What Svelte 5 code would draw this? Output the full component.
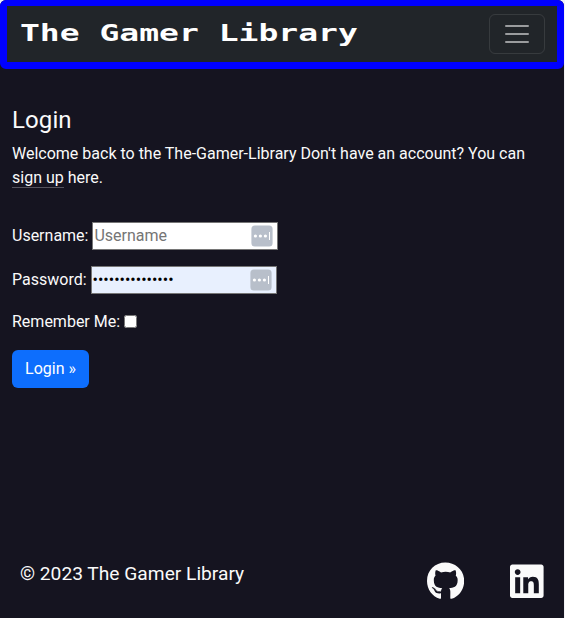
<script>
  let username = $state('');
  let password = $state('gamerlibrary123');
  let remember = $state(false);
</script>

{#snippet filler()}
  <svg class="filler" width="22" height="22" viewBox="0 0 22 22" aria-hidden="true">
    <rect x="0.4" y="0.4" width="21.2" height="21.2" rx="3.5" fill="#b8bfca" />
    <circle cx="4.4" cy="11" r="1.6" fill="#fff" />
    <circle cx="9.4" cy="11" r="1.6" fill="#fff" />
    <circle cx="14.4" cy="11" r="1.6" fill="#fff" />
    <rect x="18" y="7" width="1" height="8" fill="#fff" />
  </svg>
{/snippet}

<div class="page">
  <header>
    <span class="brand">The Gamer Library</span>
    <button class="toggler" aria-label="Toggle navigation">
      <svg width="30" height="30" viewBox="0 0 30 30">
        <path stroke="rgba(255,255,255,.55)" stroke-linecap="round" stroke-miterlimit="10" stroke-width="2" d="M4 7h22M4 15h22M4 23h22" />
      </svg>
    </button>
  </header>

  <main>
    <h1>Login</h1>
    <p>Welcome back to the The-Gamer-Library Don't have an account? You can <a href="#signup">sign up</a> here.</p>
    <form onsubmit={(e) => e.preventDefault()}>
      <div class="row">
        <label for="user">Username:</label>
        <span class="field"><input id="user" type="text" placeholder="Username" bind:value={username} />{@render filler()}</span>
      </div>
      <div class="row second">
        <label for="pass">Password:</label>
        <span class="field"><input id="pass" class="saved" type="password" bind:value={password} />{@render filler()}</span>
      </div>
      <div class="row remember">
        <label for="rem">Remember Me:</label>
        <input id="rem" type="checkbox" bind:checked={remember} />
      </div>
      <button class="submit" type="submit">Login »</button>
    </form>
  </main>

  <footer>
    <span>© 2023 The Gamer Library</span>
    <div class="social">
      <a href="#github" aria-label="GitHub">
        <svg width="37.2" height="38.4" viewBox="0 0 496 512"><path fill="#fafafa" d="M165.9 397.4c0 2-2.3 3.6-5.2 3.6-3.3.3-5.6-1.3-5.6-3.6 0-2 2.3-3.6 5.2-3.6 3-.3 5.6 1.3 5.6 3.6zm-31.1-4.5c-.7 2 1.3 4.3 4.3 4.9 2.6 1 5.6 0 6.2-2s-1.3-4.3-4.3-5.2c-2.6-.7-5.5.3-6.2 2.3zm44.2-1.7c-2.9.7-4.9 2.6-4.6 4.9.3 2 2.9 3.3 5.9 2.6 2.9-.7 4.9-2.6 4.6-4.6-.3-1.9-3-3.2-5.9-2.9zM244.8 8C106.1 8 0 113.3 0 252c0 110.9 69.8 205.8 169.5 239.2 12.8 2.3 17.3-5.6 17.3-12.1 0-6.2-.3-40.4-.3-61.4 0 0-70 15-84.7-29.8 0 0-11.4-29.1-27.8-36.6 0 0-22.9-15.7 1.6-15.4 0 0 24.9 2 38.6 25.8 21.9 38.6 58.6 27.5 72.9 20.9 2.3-16 8.8-27.1 16-33.7-55.9-6.2-112.3-14.3-112.3-110.5 0-27.5 7.6-41.3 23.6-58.9-2.6-6.5-11.1-33.3 2.6-67.9 20.9-6.5 69 27 69 27 20-5.6 41.5-8.5 62.8-8.5s42.8 2.9 62.8 8.5c0 0 48.1-33.6 69-27 13.7 34.7 5.2 61.4 2.6 67.9 16 17.7 25.8 31.5 25.8 58.9 0 96.5-58.9 104.2-114.8 110.5 9.2 7.9 17 22.9 17 46.4 0 33.7-.3 75.4-.3 83.6 0 6.5 4.6 14.4 17.3 12.1C428.2 457.8 496 362.9 496 252 496 113.3 383.5 8 244.8 8zM97.2 352.9c-1.3 1-1 3.3.7 5.2 1.6 1.6 3.9 2.3 5.2 1 1.3-1 1-3.3-.7-5.2-1.6-1.6-3.9-2.3-5.2-1zm-10.8-8.1c-.7 1.3.3 2.9 2.3 3.9 1.6 1 3.6.7 4.3-.7.7-1.3-.3-2.9-2.3-3.9-2-.6-3.6-.3-4.3.7zm32.4 35.6c-1.6 1.3-1 4.3 1.3 6.2 2.3 2.3 5.2 2.6 6.5 1 1.3-1.3.7-4.3-1.3-6.2-2.2-2.3-5.2-2.6-6.5-1zm-11.4-14.7c-1.6 1-1.6 3.6 0 5.9 1.6 2.3 4.3 3.3 5.6 2.3 1.6-1.3 1.6-3.9 0-6.2-1.4-2.3-4-3.3-5.6-2z" /></svg>
      </a>
      <a href="#linkedin" aria-label="LinkedIn">
        <svg width="33.6" height="38.4" viewBox="0 0 448 512"><path fill="#fafafa" d="M416 32H31.9C14.3 32 0 46.5 0 64.3v383.4C0 465.5 14.3 480 31.9 480H416c17.6 0 32-14.5 32-32.3V64.3c0-17.8-14.4-32.3-32-32.3zM135.4 416H69V202.2h66.5V416zm-33.2-243c-21.3 0-38.5-17.3-38.5-38.5S80.9 96 102.2 96c21.2 0 38.5 17.3 38.5 38.5 0 21.3-17.2 38.5-38.5 38.5zm282.1 243h-66.4V312c0-24.8-.5-56.7-34.5-56.7-34.6 0-39.9 27-39.9 54.9V416h-66.4V202.2h63.7v29.2h.9c8.9-16.8 30.6-34.5 62.9-34.5 67.2 0 79.7 44.3 79.7 101.9V416z" /></svg>
      </a>
    </div>
  </footer>
</div>

<style>
  :global(body) {
    background: #f3f3f5;
  }
  .page,
  .page * {
    box-sizing: border-box;
  }
  .page {
    width: 564px;
    height: 618px;
    display: flex;
    flex-direction: column;
    background: #151420;
    border-radius: 6px 6px 0 0;
    color: #fafafa;
    font: 16px/24px Roboto, sans-serif;
  }
  header {
    height: 69px;
    flex: none;
    border: solid #00f;
    border-width: 6px 7px 7px;
    border-radius: 6px;
    background: #212529;
    background-clip: padding-box;
    display: flex;
    align-items: center;
    justify-content: space-between;
    padding: 0 12px 0 13px;
  }
  .brand {
    font: bold 23px/30px "DejaVu Sans Mono", monospace;
    color: #fff;
    white-space: nowrap;
    padding-bottom: 2px;
    transform: scaleX(1.435);
    transform-origin: left;
  }
  .toggler {
    width: 56px;
    height: 40px;
    padding: 4px 12px;
    border: 1px solid rgba(255, 255, 255, 0.1);
    border-radius: 6px;
    background: none;
  }
  .toggler svg {
    display: block;
  }
  main {
    flex: 1;
    padding: 37px 12px 0;
  }
  h1 {
    margin: 0 0 7px;
    font-size: 24px;
    font-weight: 400;
    line-height: 29px;
    letter-spacing: 0.1px;
  }
  p {
    margin: 0;
  }
  p a {
    color: inherit;
    text-decoration: none;
    border-bottom: 1px solid #55545e;
  }
  form {
    padding-top: 32px;
  }
  .row {
    display: flex;
    align-items: center;
    height: 28px;
    gap: 4px;
  }
  .second {
    margin-top: 16px;
  }
  .remember {
    margin-top: 14px;
  }
  .field {
    position: relative;
    display: block;
    width: 186px;
    height: 28px;
  }
  .field input {
    display: block;
    width: 100%;
    height: 100%;
    margin: 0;
    padding: 0 1px 2px;
    border: 1px solid #767676;
    border-radius: 0;
    background: #fff;
    color: #000;
    font: inherit;
    outline: none;
  }
  .field input::placeholder {
    color: #757575;
  }
  .field .saved {
    background: #e8f0fe;
  }
  .filler {
    position: absolute;
    right: 5px;
    top: 3px;
  }
  .remember input {
    width: 13px;
    height: 13px;
    margin: 0 0 2px;
  }
  .submit {
    display: block;
    margin-top: 14px;
    width: 77px;
    height: 38px;
    padding: 0;
    border: 0;
    border-radius: 6px;
    background: #0d6efd;
    color: #fff;
    font: inherit;
  }
  footer {
    height: 57px;
    flex: none;
    display: flex;
    justify-content: space-between;
    padding: 0.6px 20px 0;
    font-size: 19.2px;
    line-height: 24px;
  }
  .social {
    display: flex;
    gap: 46px;
  }
  .social svg {
    display: block;
  }
</style>
